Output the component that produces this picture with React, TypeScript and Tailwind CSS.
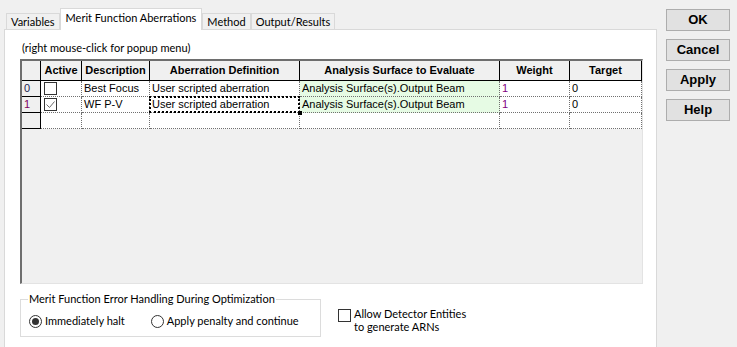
import React from "react";

const ui = { fontFamily: 'Lato, "Liberation Sans", sans-serif' };
const cell = { fontFamily: '"Liberation Sans", Arial, sans-serif' };

const cols = [
  { key: "rh", w: 19, label: "" },
  { key: "active", w: 41, label: "Active" },
  { key: "desc", w: 68, label: "Description" },
  { key: "def", w: 150, label: "Aberration Definition" },
  { key: "surf", w: 200, label: "Analysis Surface to Evaluate" },
  { key: "weight", w: 70, label: "Weight" },
  { key: "target", w: 72, label: "Target" },
];

const rows = [
  { n: "0", numColor: "text-[#1c1c50]", checked: false, desc: "Best Focus", def: "User scripted aberration", surf: "Analysis Surface(s).Output Beam", weight: "1", target: "0", focus: false },
  { n: "1", numColor: "text-[#800060]", checked: true, desc: "WF P-V", def: "User scripted aberration", surf: "Analysis Surface(s).Output Beam", weight: "1", target: "0", focus: true },
];

function Check({ checked }: { checked: boolean }) {
  return (
    <div className="w-[13px] h-[13px] border border-[#333] bg-white flex items-center justify-center">
      {checked && (
        <svg width="11" height="11" viewBox="0 0 11 11">
          <path d="M1.5 5.5 L4.5 8.5 L9.5 2.5" fill="none" stroke="#6b6b6b" strokeWidth="1" />
        </svg>
      )}
    </div>
  );
}

function Radio({ on }: { on: boolean }) {
  return (
    <div className="w-[13px] h-[13px] shrink-0 rounded-full border border-[#333] bg-white flex items-center justify-center">
      {on && <div className="w-[7px] h-[7px] rounded-full bg-[#333]" />}
    </div>
  );
}

function Grid() {
  return (
    <div className="w-[623px] h-[225px] border-t-2 border-l-2 border-t-[#6e6e6e] border-l-[#6e6e6e] border-r border-b border-r-[#e3e3e3] border-b-[#e3e3e3] bg-[#f0f0f0]" style={cell}>
      <div className="flex h-[20px]">
        {cols.map((c) => (
          <div
            key={c.key}
            style={{ width: c.w }}
            className="shrink-0 h-[20px] border-r border-b border-black bg-[#f0f0f0] text-[11px] font-bold text-black flex items-center justify-center"
          >
            {c.label}
          </div>
        ))}
      </div>
      {rows.map((r) => (
        <div key={r.n} className="flex h-[16px]">
          <div className={`w-[19px] shrink-0 border-r border-b border-black bg-[#f0f0f0] text-[11px] leading-[15px] pl-[2px] ${r.numColor}`}>{r.n}</div>
          <div className="w-[41px] shrink-0 border-r border-b border-dotted border-[#707070] bg-white pl-[3px] pt-[1px]">
            <Check checked={r.checked} />
          </div>
          <div className="w-[68px] shrink-0 border-r border-b border-dotted border-[#707070] bg-white text-[11px] leading-[15px] pl-[2px] text-black">{r.desc}</div>
          <div className="w-[150px] shrink-0 relative border-r border-b border-dotted border-[#707070] bg-white text-[11px] leading-[15px] pl-[2px] text-black">
            {r.def}
            {r.focus && (
              <>
                <div className="absolute -left-[1px] -top-[1px] w-[151px] h-[17px] border-2 border-dotted border-black" />
                <div className="absolute -right-[3px] -bottom-[3px] w-[4px] h-[4px] bg-black" />
              </>
            )}
          </div>
          <div className="w-[200px] shrink-0 border-r border-b border-dotted border-[#707070] bg-[#e6fbe4] text-[11px] leading-[15px] pl-[2px] text-black">{r.surf}</div>
          <div className="w-[70px] shrink-0 border-r border-b border-dotted border-[#707070] bg-white text-[11px] leading-[15px] pl-[2px] text-[#800080]">{r.weight}</div>
          <div className="w-[72px] shrink-0 border-r border-b border-dotted border-[#707070] bg-white text-[11px] leading-[15px] pl-[2px] text-black">{r.target}</div>
        </div>
      ))}
      <div className="flex h-[16px]">
        <div className="w-[19px] shrink-0 border-r border-b border-black bg-[#f0f0f0]" />
        {cols.slice(1).map((c) => (
          <div key={c.key} style={{ width: c.w }} className="shrink-0 border-r border-b border-dotted border-[#707070] bg-white" />
        ))}
      </div>
    </div>
  );
}

export default function App() {
  const tabs = ["Variables", "Merit Function Aberrations", "Method", "Output/Results"];
  const buttons = ["OK", "Cancel", "Apply", "Help"];
  return (
    <div className="w-[737px] h-[347px] bg-[#f0f0f0] flex overflow-hidden" style={ui}>
      <div className="w-[653px] ml-[4px] flex flex-col">
        <div className="h-[29px] flex items-end pl-[2px]">
          {tabs.map((t, i) =>
            i === 1 ? (
              <div key={t} className="h-[22px] -mb-[1px] relative z-10 bg-white border border-b-0 border-[#d9d9d9] px-[5px] text-[11px] leading-[18px] text-black whitespace-nowrap">
                {t}
              </div>
            ) : (
              <div key={t} className="h-[16px] bg-[#f0f0f0] border border-b-0 border-[#d9d9d9] px-[4px] text-[11px] leading-[16px] text-black whitespace-nowrap">
                {t}
              </div>
            )
          )}
        </div>
        <div className="flex-1 bg-white border border-b-0 border-[#d9d9d9] pl-[15px]">
          <div className="mt-[11px] h-[18px] text-[11px] leading-[14px] text-black pl-[2px]">(right mouse-click for popup menu)</div>
          <Grid />
          <div className="flex mt-[8px]">
            <fieldset className="w-[301px] min-w-0 h-[45px] border border-[#dcdcdc] px-[8px]">
              <legend className="px-[1px] -ml-[1px] text-[11px] leading-[14px] text-black whitespace-nowrap">Merit Function Error Handling During Optimization</legend>
              <div className="flex items-center mt-[8px] text-[11px] leading-[14px] text-black whitespace-nowrap">
                <Radio on />
                <span className="ml-[3px]">Immediately halt</span>
                <div className="ml-[26px] flex items-center">
                  <Radio on={false} />
                  <span className="ml-[3px]">Apply penalty and continue</span>
                </div>
              </div>
            </fieldset>
            <div className="ml-[17px] mt-[15px] flex items-start">
              <div className="w-[13px] h-[13px] shrink-0 border border-[#333] bg-white mt-[2px]" />
              <div className="ml-[3px] text-[11px] leading-[13px] text-black whitespace-nowrap">
                Allow Detector Entities
                <br />
                to generate ARNs
              </div>
            </div>
          </div>
        </div>
      </div>
      <div className="ml-[9px] pt-[9px] flex flex-col gap-[8px]">
        {buttons.map((b) => (
          <div key={b} className="w-[64px] h-[22px] bg-[#e1e1e1] border border-[#adadad] flex items-center justify-center text-[13px] font-bold text-black" style={cell}>
            {b}
          </div>
        ))}
      </div>
    </div>
  );
}
